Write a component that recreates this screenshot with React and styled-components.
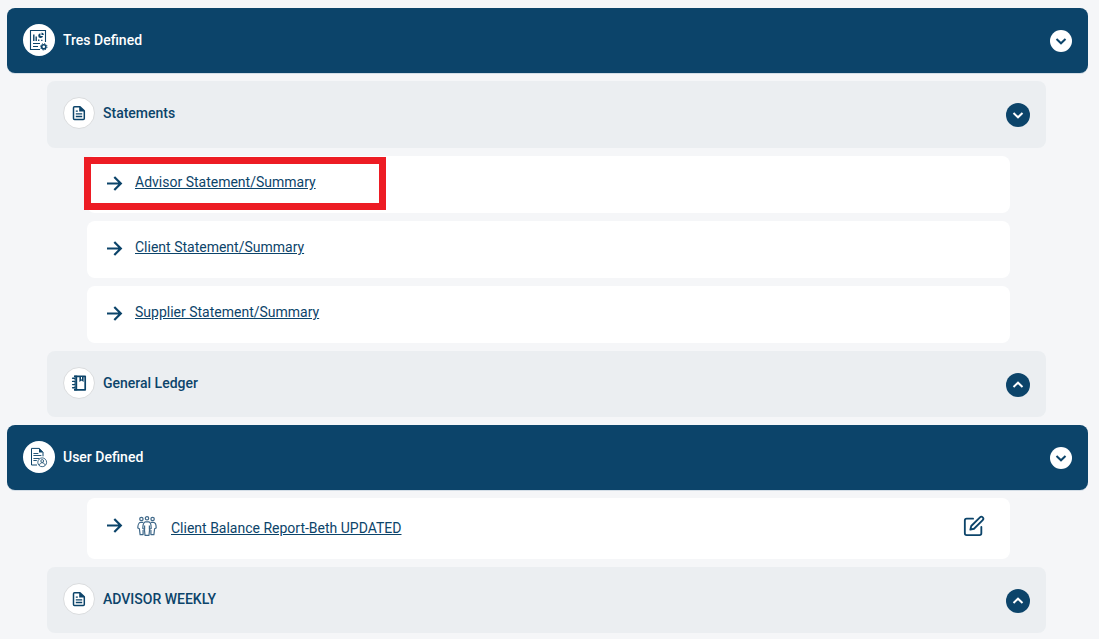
// App.jsx
import React, { useState } from "react";
import styled, { createGlobalStyle, css } from "styled-components";
import { FiEdit } from "react-icons/fi";

const navy = "#0c446a";

const sections = [
  {
    title: "Tres Defined",
    icon: "report",
    items: [
      {
        type: "group",
        title: "Statements",
        icon: "document",
        open: true,
        reports: [
          { name: "Advisor Statement/Summary", highlighted: true },
          { name: "Client Statement/Summary" },
          { name: "Supplier Statement/Summary" },
        ],
      },
      {
        type: "group",
        title: "General Ledger",
        icon: "ledger",
        reports: [],
      },
    ],
  },
  {
    title: "User Defined",
    icon: "userReport",
    items: [
      {
        type: "report",
        name: "Client Balance Report-Beth UPDATED",
        shared: true,
      },
      {
        type: "group",
        title: "ADVISOR WEEKLY",
        icon: "document",
        reports: [],
      },
    ],
  },
];

const ReportIcon = () => (
  <svg width="32" height="32" viewBox="0 0 32 32" fill="none" stroke={navy}>
    <path d="M22.5 18V6.5h-15v19h9.5" strokeWidth="1.1" />
    <path d="M10.8 17v-6.5M13.2 17v-4.5" strokeWidth="1.4" />
    <path d="M15.7 17v-1.6M18.8 17v-1.2" strokeWidth="1.3" />
    <path d="M17.4 9.2a2.4 2.4 0 1 0 2.6 2.7h-2.6z" fill={navy} stroke="none" />
    <path d="M18.5 8.6v2.5h2.4a2.5 2.5 0 0 0-2.4-2.5z" fill={navy} stroke="none" />
    <path d="M10 19.5h7M10 22.5h5" strokeWidth="1.1" />
    <circle cx="20.8" cy="22.8" r="2.1" strokeWidth="1.6" />
    <circle cx="20.8" cy="22.8" r="3.2" strokeWidth="1" strokeDasharray="1.3 1.2" />
  </svg>
);

const UserReportIcon = () => (
  <svg width="32" height="32" viewBox="0 0 32 32" fill="none" stroke={navy}>
    <path d="M14 24H8.5V7.4h7.7l3.8 3.9v4" strokeWidth="1" />
    <path d="M16 7v4.5h4.4z" fill={navy} stroke="none" />
    <path d="M10.4 12.5h5M10.4 14.5h8M10.4 17.5h6M10.4 19.5h3.4" strokeWidth="0.9" />
    <circle cx="19.2" cy="21.3" r="4.4" strokeWidth="0.8" />
    <circle cx="19.2" cy="20" r="1.4" strokeWidth="0.8" />
    <path d="M16.4 24.3c.3-3.4 5.3-3.4 5.6 0" strokeWidth="0.8" />
  </svg>
);

const DocumentIcon = () => (
  <svg width="30" height="30" viewBox="0 0 30 30" fill="none" stroke={navy}>
    <path
      d="M10.5 8.7h5.5l4.3 4.2v7.6a1 1 0 0 1-1 1h-8.8a1 1 0 0 1-1-1V9.7a1 1 0 0 1 1-1z"
      strokeWidth="1.5"
      strokeLinejoin="round"
    />
    <path d="M15.2 8.4v5h5.2z" fill={navy} stroke="none" />
    <path d="M11.8 13.2h2M11.8 15.8h6.4M11.8 18.5h6.4" strokeWidth="1.3" />
  </svg>
);

const LedgerIcon = () => (
  <svg width="30" height="30" viewBox="0 0 30 30" fill="none" stroke={navy}>
    <path d="M10.8 8.3h10.4v13.5H10.8z" strokeWidth="1.7" strokeLinejoin="round" />
    <path d="M10 7.6h3.2v14.8H10z" fill={navy} stroke="none" />
    <path d="M15.4 8h4.2v6l-2.1-1.5-2.1 1.5z" fill={navy} stroke="none" />
    <path d="M17.5 9v2.4" stroke="#fff" strokeWidth="1" />
    <path
      d="M8.3 10.3h3M8.3 13.4h3M8.3 16.6h3M8.3 19.7h3"
      stroke="#fff"
      strokeWidth="2.2"
    />
    <path
      d="M8.6 10.3h2.4M8.6 13.4h2.4M8.6 16.6h2.4M8.6 19.7h2.4"
      strokeWidth="1.4"
      strokeLinecap="round"
    />
  </svg>
);

const ArrowIcon = () => (
  <svg width="16" height="16" viewBox="0 0 16 16" fill="none" stroke={navy} strokeWidth="2.2">
    <path d="M0 7.5h14M7.3 1l6.5 6.5L7.3 14" />
  </svg>
);

const PeopleIcon = () => (
  <svg
    width="20"
    height="20"
    viewBox="0 0 20 20"
    fill="none"
    stroke="#3f6889"
    strokeWidth="1.2"
    strokeLinejoin="round"
  >
    <circle cx="4.4" cy="3" r="1.7" />
    <circle cx="15.6" cy="3" r="1.7" />
    <circle cx="10" cy="2.3" r="1.7" />
    <path d="M6.2 6.3H3.6C1.8 6.3.8 9.4.8 12l1.6.8.7 5.8h3V14" />
    <path d="M13.8 6.3h2.6c1.8 0 2.8 3.1 2.8 5.7l-1.6.8-.7 5.8h-3V14" />
    <path d="M8.3 5.9h3.4c1.9 0 2.5 3.6 2.5 6.6l-1.6.8-.6 6H8l-.6-6-1.6-.8c0-3 .6-6.6 2.5-6.6z" />
    <path d="M7.6 9.5v4M12.4 9.5v4" />
  </svg>
);

const Chevron = ({ up }) => (
  <svg width="12" height="12" viewBox="0 0 12 12" fill="none" stroke="currentColor" strokeWidth="2">
    <path d={up ? "M1.5 8L6 3.7 10.5 8" : "M1.5 4L6 8.3 10.5 4"} />
  </svg>
);

const icons = {
  report: ReportIcon,
  userReport: UserReportIcon,
  document: DocumentIcon,
  ledger: LedgerIcon,
};

const ReportRow = ({ report }) => (
  <Row $tall={report.shared}>
    <ArrowIcon />
    {report.shared && <PeopleIcon />}
    <ReportLink href="#" $shared={report.shared}>
      {report.name}
    </ReportLink>
    {report.shared && (
      <EditButton type="button" aria-label={`Edit ${report.name}`}>
        <FiEdit size={22} />
      </EditButton>
    )}
    {report.highlighted && <Highlight />}
  </Row>
);

const Group = ({ group }) => {
  const [open, setOpen] = useState(Boolean(group.open));
  const Icon = icons[group.icon];
  return (
    <>
      <GroupBar $open={open}>
        <IconCircle $outlined>
          <Icon />
        </IconCircle>
        <GroupTitle>{group.title}</GroupTitle>
        <Toggle
          type="button"
          aria-expanded={open}
          aria-label={group.title}
          onClick={() => setOpen(!open)}
        >
          <Chevron up={!open} />
        </Toggle>
      </GroupBar>
      {open && group.reports.map((r) => <ReportRow key={r.name} report={r} />)}
    </>
  );
};

const Section = ({ section }) => {
  const [open, setOpen] = useState(true);
  const Icon = icons[section.icon];
  return (
    <>
      <SectionBar>
        <IconCircle>
          <Icon />
        </IconCircle>
        <SectionTitle>{section.title}</SectionTitle>
        <Toggle
          type="button"
          $light
          aria-expanded={open}
          aria-label={section.title}
          onClick={() => setOpen(!open)}
        >
          <Chevron up={!open} />
        </Toggle>
      </SectionBar>
      {open &&
        section.items.map((item) =>
          item.type === "group" ? (
            <Group key={item.title} group={item} />
          ) : (
            <ReportRow key={item.name} report={item} />
          )
        )}
    </>
  );
};

const App = () => (
  <>
    <GlobalStyle />
    <Page>
      {sections.map((section) => (
        <Section key={section.title} section={section} />
      ))}
    </Page>
  </>
);

const GlobalStyle = createGlobalStyle`
  * {
    box-sizing: border-box;
  }

  body {
    margin: 0;
    background: #f5f6f8;
    color: ${navy};
    font-family: Roboto, "Liberation Sans", sans-serif;
    font-size: 14px;
    line-height: 20px;
  }
`;

const Page = styled.main`
  display: flex;
  flex-direction: column;
  gap: 8px;
  padding: 8px 11px 6px 7px;
`;

const bar = css`
  display: flex;
  align-items: flex-start;
  gap: 8px;
  padding: 16px;
  border-radius: 8px;
`;

const SectionBar = styled.header`
  ${bar}
  min-height: 65px;
  background: ${navy};
  color: #fff;
  box-shadow: 0 1px 0 #d3dde6;
`;

const GroupBar = styled.div`
  ${bar}
  min-height: ${({ $open }) => ($open ? 67 : 66)}px;
  margin: 0 42px 0 40px;
  background: #ebeef1;
`;

const IconCircle = styled.span`
  display: flex;
  align-items: center;
  justify-content: center;
  flex: none;
  width: 32px;
  height: 32px;
  border-radius: 50%;
  border: ${({ $outlined }) => ($outlined ? "1px solid #dadcde" : "0")};
  background: #fff;
`;

const SectionTitle = styled.h2`
  flex: 1;
  margin: 0;
  font-size: 14px;
  font-weight: 500;
  line-height: 32px;
`;

const GroupTitle = styled(SectionTitle).attrs({ as: "h3" })``;

const Toggle = styled.button`
  display: flex;
  align-items: center;
  justify-content: center;
  width: ${({ $light }) => ($light ? 22 : 24)}px;
  height: ${({ $light }) => ($light ? 22 : 24)}px;
  margin-top: 6px;
  padding: 0;
  border: 0;
  border-radius: 50%;
  background: ${({ $light }) => ($light ? "#fff" : navy)};
  color: ${({ $light }) => ($light ? navy : "#fff")};
  cursor: pointer;
`;

const Row = styled.div`
  position: relative;
  display: flex;
  align-items: center;
  gap: ${({ $tall }) => ($tall ? 14 : 12)}px;
  min-height: ${({ $tall }) => ($tall ? 61 : 57)}px;
  margin: 0 78px 0 80px;
  padding: ${({ $tall }) => ($tall ? "0 25px 5px 20px" : "0 20px 1px")};
  border-radius: 8px;
  background: #fff;

  svg {
    flex: none;
  }
`;

const ReportLink = styled.a`
  padding: ${({ $shared }) => ($shared ? "4px 0 0" : "0 0 4px")};
  color: ${navy};
  text-decoration: underline;
`;

const EditButton = styled.button`
  display: flex;
  margin-left: auto;
  padding: 0;
  border: 0;
  background: none;
  color: ${navy};
  cursor: pointer;
`;

/* frame drawn over the row, slightly wider than its left edge */
const Highlight = styled.span`
  position: absolute;
  top: 1px;
  left: -3px;
  width: 302px;
  height: 53px;
  border: 7px solid #ed1c24;
  pointer-events: none;
`;

export default App;
